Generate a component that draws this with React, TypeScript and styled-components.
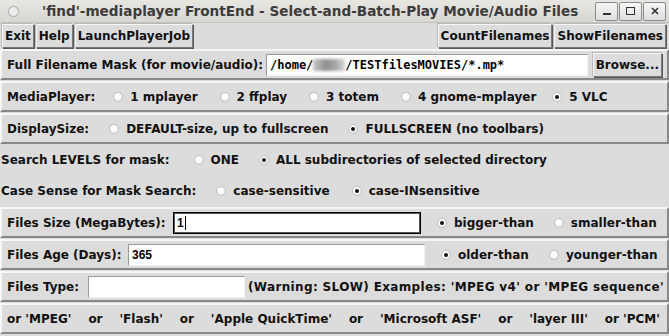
import React from 'react';
import styled, { createGlobalStyle } from 'styled-components';

const Global = createGlobalStyle`
  body {
    margin: 0;
    background: #dcdcdc;
  }
`;

const labelFont = `"DejaVu Sans", "Liberation Sans", sans-serif`;

const S = {
  Window: styled.div`
    width: 669px;
    height: 336px;
    overflow: hidden;
    background: #dcdcdc;
    font-family: ${labelFont};
    font-weight: bold;
    font-size: 12px;
    color: #111;
  `,
  TitleBar: styled.div`
    height: 22px;
    display: flex;
    align-items: center;
    background: linear-gradient(#e8e6e1, #d8d6d1);
    border-bottom: 1px solid #c4c2bd;
    padding: 0 3px 0 8px;
  `,
  TitleDot: styled.div`
    width: 9px;
    height: 9px;
    border-radius: 50%;
    border: 1px solid #a8a8a8;
    background: #ececec;
    margin-right: 23px;
  `,
  Title: styled.div`
    flex: 1;
    font-family: "DejaVu Sans", sans-serif;
    font-weight: bold;
    font-size: 13.6px;
    color: #3c3c3c;
    white-space: nowrap;
  `,
  WinButtons: styled.div`
    display: flex;
    gap: 1px;
  `,
  WinButton: styled.div`
    width: 21px;
    height: 17px;
    border: 1px solid #8a8a8a;
    border-radius: 2px;
    background: linear-gradient(#f6f6f6, #dedede);
    display: flex;
    align-items: center;
    justify-content: center;
  `,
  Toolbar: styled.div`
    display: flex;
    justify-content: space-between;
    padding: 1px 3px 1px 2px;
  `,
  ButtonGroup: styled.div`
    display: flex;
    gap: 2px;
  `,
  Button: styled.div`
    height: 22px;
    padding: 0 2px;
    display: flex;
    align-items: center;
    border: 1px solid;
    border-color: #f8f8f8 #7a7a7a #7a7a7a #f8f8f8;
    box-shadow: 1px 1px 0 #5a5a5a, -1px -1px 0 #b8b8b8;
    background: #dcdcdc;
    white-space: nowrap;
  `,
  Frame: styled.div<{ flat?: boolean }>`
    display: flex;
    align-items: center;
    height: ${({ flat }) => (flat ? '30px' : '27px')};
    margin-bottom: 1px;
    padding: 0 ${({ flat }) => (flat ? '1px' : '5px')};
    border: ${({ flat }) => (flat ? '0' : '2px solid')};
    border-color: #f6f6f6 #888 #888 #f6f6f6;
    white-space: nowrap;
  `,
  Label: styled.span<{ w?: number }>`
    flex-shrink: 0;
    ${({ w }) => (w ? `width: ${w}px;` : 'margin-right: 2px;')}
  `,
  Entry: styled.div<{ w: number; focused?: boolean; mono?: boolean }>`
    flex-shrink: 0;
    width: ${({ w }) => w}px;
    height: 22px;
    box-sizing: border-box;
    background: #fff;
    border: 1px solid;
    border-color: ${({ focused }) => (focused ? '#000' : '#9a9a9a #f2f2f2 #f2f2f2 #9a9a9a')};
    box-shadow: ${({ focused }) => (focused ? 'inset 0 0 0 1px #555' : 'none')};
    display: flex;
    align-items: center;
    padding-left: 3px;
    font-family: ${({ mono }) =>
      mono ? '"DejaVu Sans Mono", monospace' : '"Liberation Sans", sans-serif'};
    font-weight: bold;
    font-size: 12px;
    color: #000;
  `,
  Blur: styled.span`
    display: inline-block;
    width: 32px;
    height: 12px;
    background: linear-gradient(90deg, #c8c8c8, #8f8f8f 40%, #a6a6a6 70%, #d6d6d6);
    filter: blur(1.5px);
  `,
  Caret: styled.span`
    display: inline-block;
    width: 1px;
    height: 14px;
    background: #000;
    margin-left: 1px;
  `,
  Radio: styled.span<{ lead: number }>`
    display: inline-flex;
    align-items: center;
    margin-left: ${({ lead }) => lead}px;
  `,
  RadioDot: styled.span<{ on?: boolean }>`
    flex-shrink: 0;
    box-sizing: border-box;
    width: 10px;
    height: 10px;
    border-radius: 50%;
    border: 1px solid #c2c2c2;
    background: radial-gradient(circle at 45% 40%, #ffffff 30%, #ececec 75%, #d6d6d6);
    display: inline-flex;
    align-items: center;
    justify-content: center;
    margin-right: 7px;
    &::after {
      content: '';
      width: 4px;
      height: 4px;
      border-radius: 50%;
      background: ${({ on }) => (on ? '#111' : 'transparent')};
    }
  `,
  Spacer: styled.div`
    flex: 1;
  `,
  Note: styled.span`
    margin-left: 3px;
    letter-spacing: 0.35px;
  `,
  Spread: styled.div`
    flex: 1;
    display: flex;
    justify-content: space-between;
    padding-right: 2px;
  `,
};

type Opt = { text: string; on?: boolean; lead: number };

const Radios = ({ opts }: { opts: Opt[] }) => (
  <>
    {opts.map((o) => (
      <S.Radio key={o.text} lead={o.lead}>
        <S.RadioDot on={o.on} />
        {o.text}
      </S.Radio>
    ))}
  </>
);

const typeWords = [
  "or 'MPEG'",
  'or',
  "'Flash'",
  'or',
  "'Apple QuickTime'",
  'or',
  "'Microsoft ASF'",
  'or',
  "'layer III'",
  "or 'PCM'",
];

const App = () => {
  return (
    <S.Window>
      <Global />
      <S.TitleBar>
        <S.TitleDot />
        <S.Title>'find'-mediaplayer FrontEnd - Select-and-Batch-Play Movie/Audio Files</S.Title>
        <S.WinButtons>
          <S.WinButton>
            <svg width="8" height="8" viewBox="0 0 8 8">
              <rect x="0" y="6" width="8" height="2" fill="#333" />
            </svg>
          </S.WinButton>
          <S.WinButton>
            <svg width="9" height="8" viewBox="0 0 9 8">
              <rect x="0.5" y="0.5" width="8" height="7" fill="none" stroke="#333" />
            </svg>
          </S.WinButton>
          <S.WinButton>
            <svg width="8" height="8" viewBox="0 0 8 8">
              <path d="M1 1 L7 7 M7 1 L1 7" stroke="#333" strokeWidth="1.6" />
            </svg>
          </S.WinButton>
        </S.WinButtons>
      </S.TitleBar>

      <S.Toolbar>
        <S.ButtonGroup>
          <S.Button>Exit</S.Button>
          <S.Button>Help</S.Button>
          <S.Button>LaunchPlayerJob</S.Button>
        </S.ButtonGroup>
        <S.ButtonGroup>
          <S.Button>CountFilenames</S.Button>
          <S.Button>ShowFilenames</S.Button>
        </S.ButtonGroup>
      </S.Toolbar>

      <S.Frame>
        <S.Label w={259}>Full Filename Mask (for movie/audio):</S.Label>
        <S.Entry w={322} mono>
          /home/<S.Blur />/TESTfilesMOVIES/*.mp*
        </S.Entry>
        <S.Spacer />
        <S.Button>Browse...</S.Button>
      </S.Frame>

      <S.Frame>
        <S.Label>MediaPlayer:</S.Label>
        <Radios
          opts={[
            { text: '1 mplayer', lead: 16 },
            { text: '2 ffplay', lead: 22 },
            { text: '3 totem', lead: 22 },
            { text: '4 gnome-mplayer', lead: 22 },
            { text: '5 VLC', lead: 16, on: true },
          ]}
        />
      </S.Frame>

      <S.Frame>
        <S.Label>DisplaySize:</S.Label>
        <Radios
          opts={[
            { text: 'DEFAULT-size, up to fullscreen', lead: 18 },
            { text: 'FULLSCREEN (no toolbars)', lead: 20, on: true },
          ]}
        />
      </S.Frame>

      <S.Frame flat>
        <S.Label>Search LEVELS for mask:</S.Label>
        <Radios
          opts={[
            { text: 'ONE', lead: 22 },
            { text: 'ALL subdirectories of selected directory', lead: 20, on: true },
          ]}
        />
      </S.Frame>

      <S.Frame flat>
        <S.Label>Case Sense for Mask Search:</S.Label>
        <Radios
          opts={[
            { text: 'case-sensitive', lead: 18 },
            { text: 'case-INsensitive', lead: 22, on: true },
          ]}
        />
      </S.Frame>

      <S.Frame>
        <S.Label w={166}>Files Size (MegaBytes):</S.Label>
        <S.Entry w={248} focused>
          1<S.Caret />
        </S.Entry>
        <Radios
          opts={[
            { text: 'bigger-than', lead: 16, on: true },
            { text: 'smaller-than', lead: 20 },
          ]}
        />
      </S.Frame>

      <S.Frame>
        <S.Label w={121}>Files Age (Days):</S.Label>
        <S.Entry w={297}>365</S.Entry>
        <Radios
          opts={[
            { text: 'older-than', lead: 16, on: true },
            { text: 'younger-than', lead: 20 },
          ]}
        />
      </S.Frame>

      <S.Frame>
        <S.Label w={81}>Files Type:</S.Label>
        <S.Entry w={157} />
        <S.Note>(Warning: SLOW) Examples: 'MPEG v4' or 'MPEG sequence'</S.Note>
      </S.Frame>

      <S.Frame>
        <S.Spread>
          {typeWords.map((w, i) => (
            <span key={i}>{w}</span>
          ))}
        </S.Spread>
      </S.Frame>
    </S.Window>
  );
};

export default App;
